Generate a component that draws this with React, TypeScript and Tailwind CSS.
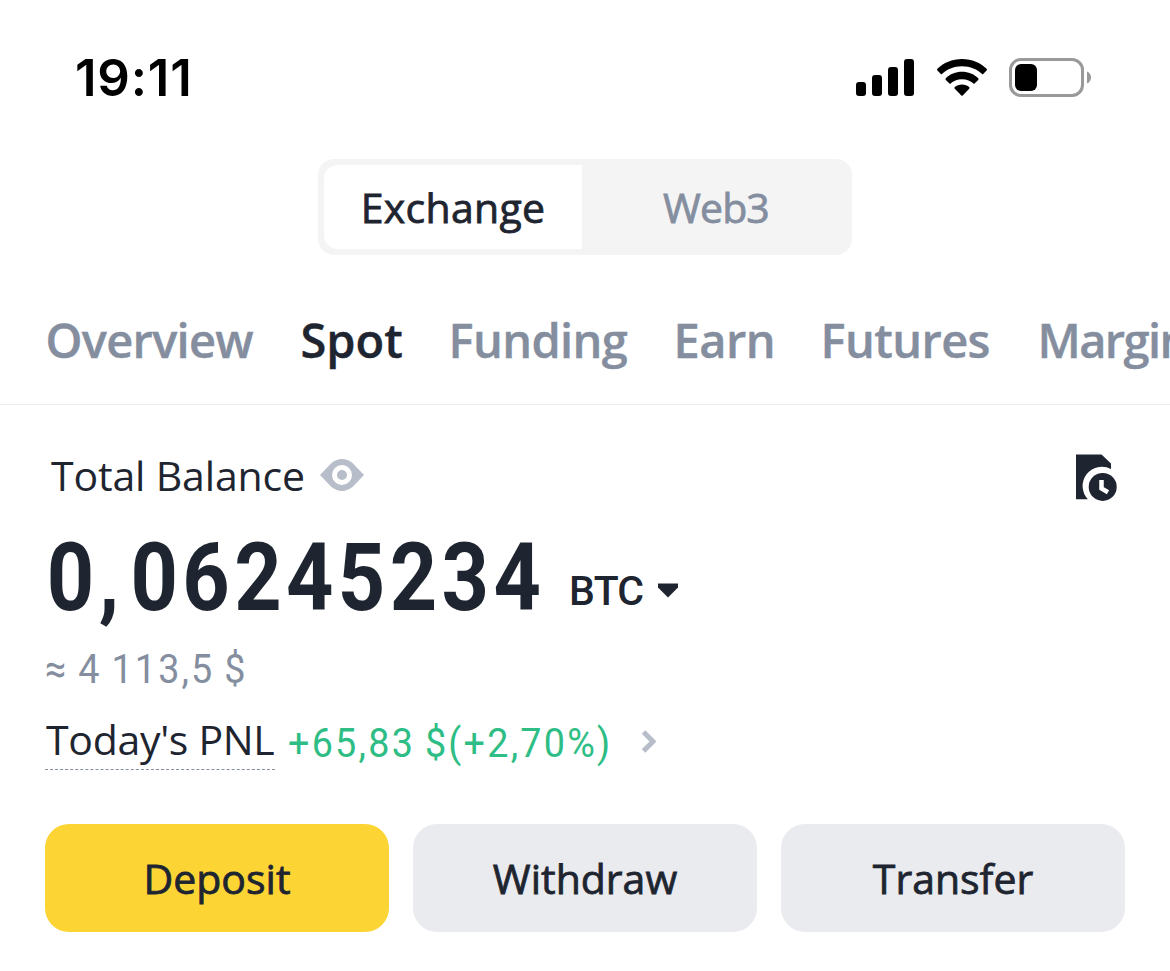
import clsx from 'clsx';

const TABS = [
  { label: 'Overview', tracking: 'tracking-[-0.7px]' },
  { label: 'Spot', tracking: 'tracking-[0px]' },
  { label: 'Funding', tracking: 'tracking-[-0.6px]' },
  { label: 'Earn', tracking: 'tracking-[-0.5px]' },
  { label: 'Futures', tracking: 'tracking-[-0.6px]' },
  { label: 'Margin', tracking: 'tracking-[-1.6px]' },
];

const ACTIONS = [
  { label: 'Deposit', primary: true },
  { label: 'Withdraw', primary: false },
  { label: 'Transfer', primary: false },
];

function SignalIcon() {
  return (
    <svg width="58" height="38" viewBox="0 0 58 38" fill="#000">
      <rect x="0" y="23" width="10" height="14" rx="3" />
      <rect x="16" y="16" width="10" height="21" rx="3" />
      <rect x="32" y="8" width="10" height="29" rx="3" />
      <rect x="48" y="0" width="10" height="37" rx="3" />
    </svg>
  );
}

function WifiIcon() {
  return (
    <svg width="52" height="38" viewBox="0 0 52 38" fill="#000">
      <path d="M26 0C35.8 0 44.700 3.800 50.600 9.800Q51.400 10.700 50.600 11.600L46.700 15.500C41.300 10.200 34.200 7.200 26 7.200S10.700 10.200 5.300 15.500L1.400 11.600Q.6 10.700 1.400 9.800C7.300 3.800 16.200 0 26 0Z" />
      <path d="M26 12.800C32.300 12.800 38 15.200 42.200 19.200Q43 20 42.200 20.900L38 25C34.900 22 30.700 20.200 26 20.200S17.100 22 14 25L9.800 20.900Q9 20 9.800 19.200C14 15.200 19.700 12.800 26 12.800Z" />
      <path d="M26 25.600C28.800 25.600 31.500 26.600 33.200 28Q34 28.800 33.200 29.700L26.700 36.500Q26 37.200 25.300 36.500L18.800 29.700Q18 28.800 18.800 28C20.500 26.600 23.200 25.600 26 25.600Z" />
    </svg>
  );
}

function BatteryIcon() {
  return (
    <svg width="83" height="40" viewBox="0 0 83 40">
      <rect x="1.500" y="1.500" width="72" height="36" rx="10.500" fill="none" stroke="#999" strokeWidth="3" />
      <rect x="6" y="6" width="22" height="27" rx="6" fill="#000" />
      <path d="M78 13.500C80.800 14.600 82 17 82 19.500S80.800 24.400 78 25.500Z" fill="#999" />
    </svg>
  );
}

function EyeIcon() {
  return (
    <svg width="44" height="34" viewBox="0 0 44 34" fill="none">
      <path d="M0 17 11.500 5Q22-3.200 32.500 5L44 17 32.500 29Q22 37.200 11.500 29Z" fill="#b7bdc9" />
      <circle cx="22" cy="17" r="7.500" stroke="#fff" strokeWidth="5" />
    </svg>
  );
}

function HistoryIcon() {
  return (
    <svg width="42" height="48" viewBox="0 0 42 48" fill="#1e2530">
      <path d="M0 .5H25.500L35 9.500V15A19.300 19.300 0 0 0 11.900 45.300H0Z" />
      <circle cx="26.700" cy="32.900" r="14" />
      <path d="M25.500 26V34.500L32 38.300" fill="none" stroke="#fff" strokeWidth="4.500" />
    </svg>
  );
}

function StatusBar() {
  return (
    <header className="flex h-[159px] justify-between pl-[75px] pr-[78px]">
      <span className="pt-[48px] font-['Inter'] text-[51px] font-semibold leading-[60px] tracking-[0.8px] text-black">
        19:11
      </span>
      <div className="flex items-start pt-[59px]">
        <SignalIcon />
        <div className="ml-[22px]">
          <WifiIcon />
        </div>
        <div className="-mt-px ml-[21px]">
          <BatteryIcon />
        </div>
      </div>
    </header>
  );
}

function ModeSwitch() {
  return (
    <div className="mx-auto flex h-24 w-[534px] rounded-[16px] bg-[#f4f4f4] p-1.5 text-[41px] [-webkit-text-stroke:0.8px]">
      <button className="flex h-[84px] w-[258px] items-center justify-center rounded-l-[14px] bg-white pt-0.5 tracking-[0.3px]">
        Exchange
      </button>
      <button className="flex flex-1 items-center justify-center pl-1 pt-0.5 tracking-[-0.9px] text-[#848e9f]">
        Web3
      </button>
    </div>
  );
}

function WalletTabs() {
  return (
    <nav className="grid h-[150px] grid-cols-[255px_148px_225px_147px_217px_200px] overflow-hidden border-b border-[#eaecef] pl-[45.5px] pt-[53px] text-[47px] font-semibold leading-[64px] text-[#848e9f] [-webkit-text-stroke:0.4px]">
      {TABS.map((tab) => (
        <span
          key={tab.label}
          className={clsx('whitespace-nowrap', tab.tracking, tab.label === 'Spot' && 'text-[#1e2530]')}
        >
          {tab.label}
        </span>
      ))}
    </nav>
  );
}

function Balance() {
  return (
    <section className="px-[45px]">
      <div className="flex h-[115px] items-start justify-between pt-[42px]">
        <div className="flex items-center pl-1.5">
          <span className="w-[269px] whitespace-nowrap pt-px text-[41px] leading-[54px] tracking-[-0.15px]">
            Total Balance
          </span>
          <EyeIcon />
        </div>
        <div className="mr-[7px] pt-[7px]">
          <HistoryIcon />
        </div>
      </div>

      <div className="flex h-[121px] items-start font-['Roboto']">
        <span className="w-[524px] origin-left scale-x-[0.88] whitespace-nowrap pl-[2px] pt-[3px] text-[94px] font-bold leading-[110px] tracking-[5px]">
          0<span className="tracking-[13px]">,</span>06245234
        </span>
        <span className="pt-[46px] text-[41px] font-medium leading-[50px] tracking-[-0.7px]">BTC</span>
        <svg className="ml-[15px] mt-[63px]" width="20" height="15" viewBox="0 0 20 15" fill="#1e2530">
          <path d="M0 .5H20V4.500L10 14.500 0 4.500Z" />
        </svg>
      </div>

      <div className="h-[69px] origin-left scale-x-[0.92] whitespace-pre font-['Roboto'] text-[41px] leading-[56px] tracking-[2.3px] text-[#848e9f] [word-spacing:-1.7px]">
        ≈ 4 113,5 $
      </div>

      <div className="flex h-[114px] items-start">
        <span className="h-[60px] w-[230px] whitespace-nowrap border-b border-dashed border-[#848e9f] pl-px pt-px text-[41px] leading-[56px] tracking-[-0.3px]">
          Today's PNL
        </span>
        <span className="ml-[13px] w-[355px] origin-left scale-x-[0.92] whitespace-nowrap pt-[5px] font-['Roboto'] text-[41px] leading-[56px] tracking-[2.45px] text-[#2ebd85] [word-spacing:-2px]">
          +65,83 $(+2,70%)
        </span>
        <svg className="-ml-px mt-[20px]" width="14" height="24" viewBox="0 0 14 24" fill="none" stroke="#b7bdc9" strokeWidth="5">
          <path d="M1.500 2 11 11.500 1.500 21" />
        </svg>
      </div>

      <div className="grid grid-cols-3 gap-6">
        {ACTIONS.map((action) => (
          <button
            key={action.label}
            className={clsx(
              'flex h-[108px] items-center justify-center rounded-[24px] pt-0.5 text-[41px] [-webkit-text-stroke:0.8px]',
              action.primary ? 'bg-[#fcd535]' : 'bg-[#eaebef]',
            )}
          >
            {action.label}
          </button>
        ))}
      </div>
    </section>
  );
}

export default function App() {
  return (
    <main className="h-[971px] w-[1170px] overflow-hidden bg-white font-['Open_Sans',sans-serif] text-[#1e2530]">
      <StatusBar />
      <ModeSwitch />
      <WalletTabs />
      <Balance />
    </main>
  );
}
